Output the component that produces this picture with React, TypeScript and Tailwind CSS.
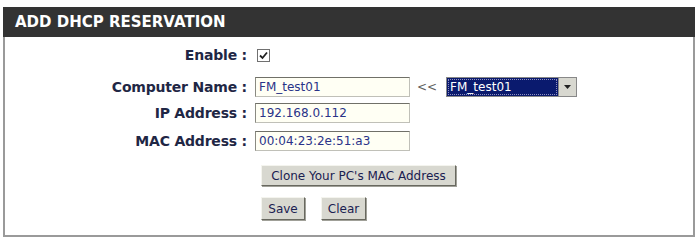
import React from "react";

const labelCls =
  "w-[250px] shrink-0 text-right pr-[8px] font-bold text-[14px] tracking-[-0.2px] text-[#1f2745]";
const inputCls =
  "w-[155px] h-[20px] px-[3px] text-[12px] text-[#2a3388] bg-[#fffff4] border border-[#c0c0b8] border-t-[#707068] border-l-[#8a8a82] outline-none";

function Row({ label, children }: { label: string; children: React.ReactNode }) {
  return (
    <div className="flex items-center h-[20px]">
      <div className={labelCls}>{label}</div>
      {children}
    </div>
  );
}

function Btn({ children, w }: { children: React.ReactNode; w: string }) {
  return (
    <button
      className={`${w} text-[12px] text-[#1a2050] bg-[#d8d8d0] border border-[#f4f4ee] border-r-[#68685f] border-b-[#68685f] shadow-[1px_1px_0_#a0a098]`}
    >
      {children}
    </button>
  );
}

export default function App() {
  return (
    <div
      className="w-[698px] h-[240px] bg-white pt-[7px] pl-[3px] pr-[3px]"
      style={{ fontFamily: "Tahoma, 'DejaVu Sans', Verdana, sans-serif" }}
    >
      <div className="h-[230px] border-2 border-t-0 border-[#9a9a9a]">
        <div className="h-[30px] bg-[#333333] flex items-center pl-[12px] -mx-[2px]">
          <span className="text-white font-bold text-[15px]">ADD DHCP RESERVATION</span>
        </div>
        <div className="flex flex-col pt-[8px]">
          <Row label="Enable :">
            <div className="w-[13px] h-[13px] ml-[2px] border border-[#707070] bg-white flex items-center justify-center">
              <svg width="9" height="9" viewBox="0 0 9 9">
                <path d="M1 4.5 L3.5 7 L8 1.5" stroke="#222" strokeWidth="1.8" fill="none" />
              </svg>
            </div>
          </Row>
          <div className="h-[12px]" />
          <Row label="Computer Name :">
            <input className={`${inputCls} h-[20px]`} defaultValue="FM_test01" readOnly />
            <span className="ml-[7px] text-[12px] text-[#606060]">&lt;&lt;</span>
            <div className="ml-[9px] w-[131px] h-[20px] flex items-center border border-[#888] bg-white">
              <div className="flex-1 h-full bg-[#0a1a6e] text-white text-[12px] pl-[3px] leading-[18px] outline-1 outline-dotted outline-[#9090c0] -outline-offset-2">
                FM_test01
              </div>
              <div className="w-[18px] h-full bg-[#d8d8d0] border-l border-[#888] flex items-center justify-center">
                <svg width="7" height="4" viewBox="0 0 7 4">
                  <path d="M0 0 H7 L3.5 4 Z" fill="#222" />
                </svg>
              </div>
            </div>
          </Row>
          <div className="h-[6px]" />
          <Row label="IP Address :">
            <input className={inputCls} defaultValue="192.168.0.112" readOnly />
          </Row>
          <div className="h-[8px]" />
          <Row label="MAC Address :">
            <input className={inputCls} defaultValue="00:04:23:2e:51:a3" readOnly />
          </Row>
          <div className="pl-[256px] pt-[14px] flex">
            <Btn w="w-[195px] h-[21px]">Clone Your PC's MAC Address</Btn>
          </div>
          <div className="pl-[256px] pt-[11px] flex gap-[16px]">
            <Btn w="w-[44px] h-[23px]">Save</Btn>
            <Btn w="w-[45px] h-[23px]">Clear</Btn>
          </div>
        </div>
      </div>
    </div>
  );
}
